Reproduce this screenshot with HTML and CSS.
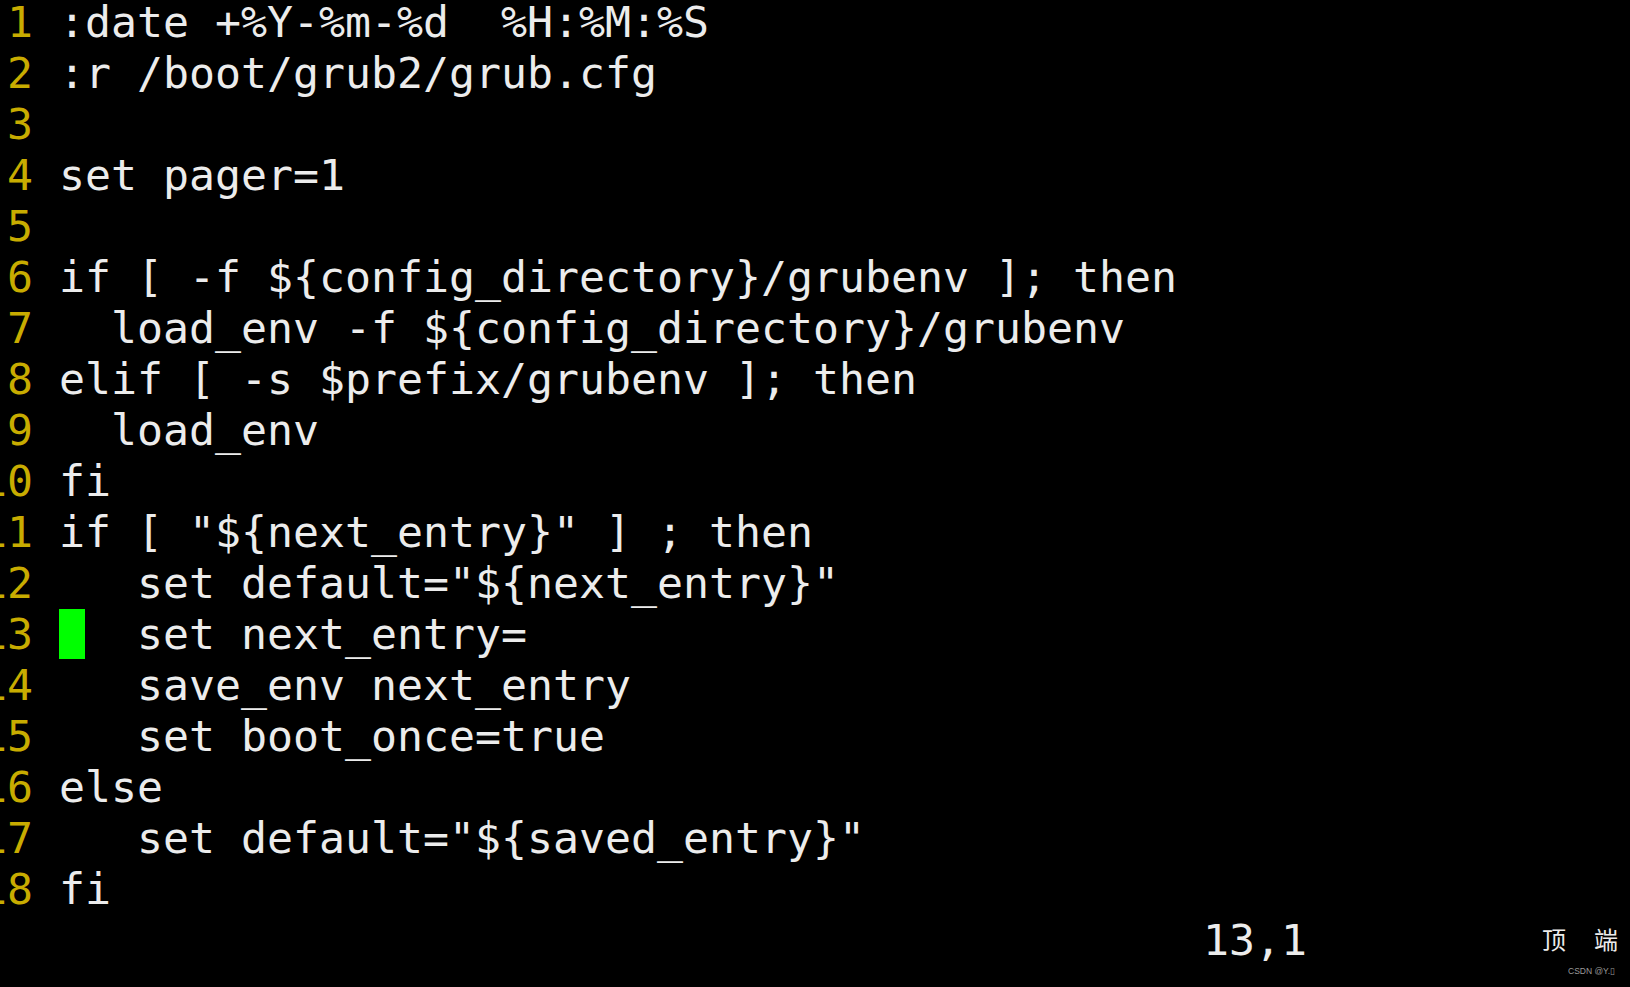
FILE: index.html
```html
<!DOCTYPE html>
<html>
<head>
<meta charset="utf-8">
<link rel="stylesheet" href="styles.css">
</head>
<body>
<div class="term">
<div class="row"><span class="ln">  1 </span><span class="tx">:date +%Y-%m-%d  %H:%M:%S</span></div>
<div class="row"><span class="ln">  2 </span><span class="tx">:r /boot/grub2/grub.cfg</span></div>
<div class="row"><span class="ln">  3 </span><span class="tx"></span></div>
<div class="row"><span class="ln">  4 </span><span class="tx">set pager=1</span></div>
<div class="row"><span class="ln">  5 </span><span class="tx"></span></div>
<div class="row"><span class="ln">  6 </span><span class="tx">if [ -f ${config_directory}/grubenv ]; then</span></div>
<div class="row"><span class="ln">  7 </span><span class="tx">  load_env -f ${config_directory}/grubenv</span></div>
<div class="row"><span class="ln">  8 </span><span class="tx">elif [ -s $prefix/grubenv ]; then</span></div>
<div class="row"><span class="ln">  9 </span><span class="tx">  load_env</span></div>
<div class="row"><span class="ln"> 10 </span><span class="tx">fi</span></div>
<div class="row"><span class="ln"> 11 </span><span class="tx">if [ "${next_entry}" ] ; then</span></div>
<div class="row"><span class="ln"> 12 </span><span class="tx">   set default="${next_entry}"</span></div>
<div class="row"><span class="ln"> 13 </span><span class="tx"><span class="cursor"> </span>  set next_entry=</span></div>
<div class="row"><span class="ln"> 14 </span><span class="tx">   save_env next_entry</span></div>
<div class="row"><span class="ln"> 15 </span><span class="tx">   set boot_once=true</span></div>
<div class="row"><span class="ln"> 16 </span><span class="tx">else</span></div>
<div class="row"><span class="ln"> 17 </span><span class="tx">   set default="${saved_entry}"</span></div>
<div class="row"><span class="ln"> 18 </span><span class="tx">fi</span></div>
<div class="row status"><span class="tx">                                                13,1         <span class="cjk">顶</span><span class="cjk">端</span></span></div>
</div>
<div class="mark">CSDN @Y.▯</div>
</body>
</html>
```
FILE: styles.css
```css
html, body {
  margin: 0;
  padding: 0;
  background: #000;
  width: 1630px;
  height: 987px;
  overflow: hidden;
}
.term {
  margin-left: -45px;
  margin-top: -3.5px;
  font-family: "DejaVu Sans Mono", monospace;
  font-size: 43.2px;
  line-height: 51px;
  color: #ececec;
}
.row {
  height: 51px;
  white-space: pre;
}
.ln {
  color: #c8ac00;
}
.cursor {
  display: inline-block;
  width: 1ch;
  height: 50px;
  background: #00ff00;
  vertical-align: top;
}
.cjk {
  display: inline-block;
  width: 51px;
  padding-left: 1px;
  font-family: "Noto Sans CJK SC", sans-serif;
  font-size: 24px;
  vertical-align: 6px;
  line-height: 1;
}
.mark {
  position: absolute;
  left: 1568px;
  top: 966px;
  font-family: "Liberation Sans", Arial, sans-serif;
  font-size: 8.5px;
  color: #9a9a9a;
  white-space: nowrap;
}
```
